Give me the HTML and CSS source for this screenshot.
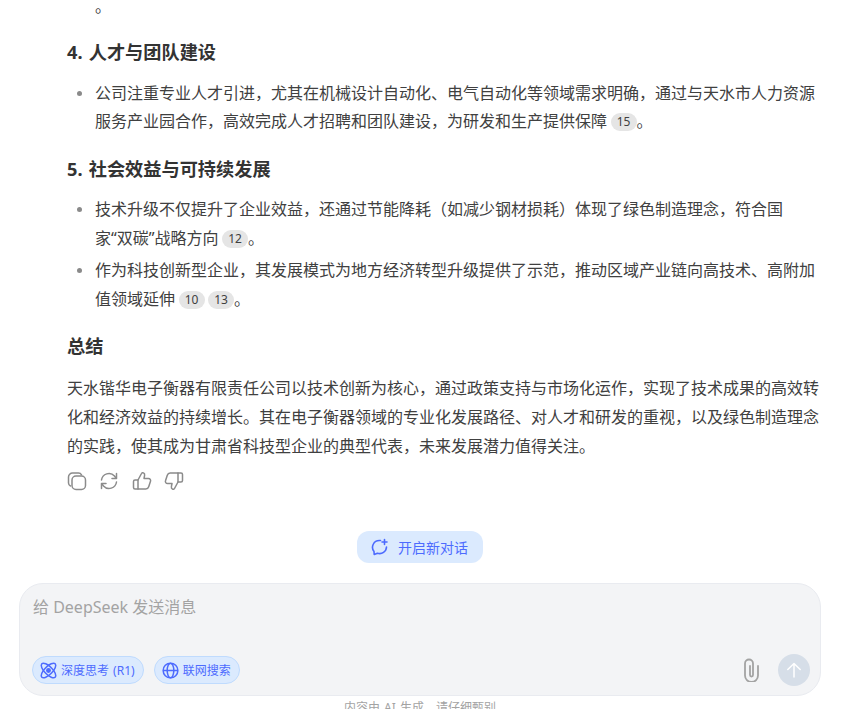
FILE: index.html
```html
<!DOCTYPE html>
<html lang="zh-CN">
<head>
<meta charset="utf-8">
<title>DeepSeek</title>
<link rel="stylesheet" href="styles.css">
</head>
<body>
<div class="page">
  <main class="answer">
    <p class="tail">。</p>
    <h3>4. 人才与团队建设</h3>
    <ul>
      <li>公司注重专业人才引进，尤其在机械设计自动化、电气自动化等领域需求明确，通过与天水市人力资源服务产业园合作，高效完成人才招聘和团队建设，为研发和生产提供保障<span class="cite">15</span>。</li>
    </ul>
    <h3>5. 社会效益与可持续发展</h3>
    <ul>
      <li>技术升级不仅提升了企业效益，还通过节能降耗（如减少钢材损耗）体现了绿色制造理念，符合国<span class="keep">家“双碳”</span>战略方向<span class="cite">12</span>。</li>
      <li>作为科技创新型企业，其发展模式为地方经济转型升级提供了示范，推动区域产业链向高技术、高附加值领域延伸<span class="cite">10</span><span class="cite">13</span>。</li>
    </ul>
    <h3>总结</h3>
    <p class="summary">天水锴华电子衡器有限责任公司以技术创新为核心，通过政策支持与市场化运作，实现了技术成果的高效转化和经济效益的持续增长。其在电子衡器领域的专业化发展路径、对人才和研发的重视，以及绿色制造理念的实践，使其成为甘肃省科技型企业的典型代表，未来发展潜力值得关注。</p>
    <div class="actions">
      <svg class="act" viewBox="0 0 20 20"><rect x="5" y="5" width="13.500" height="13.500" rx="4"/><path d="M14.500 3.800A3.500 3.500 0 0 0 11.500 2H5.500A4 4 0 0 0 1.500 6v6a3.500 3.500 0 0 0 2 3"/></svg>
      <svg class="act" viewBox="0 0 20 20"><path d="M2.500 9A7.500 7.500 0 0 1 15.500 5l1.500 2"/><path d="M17.500 2.500V7.500H13"/><path d="M17.500 11A7.500 7.500 0 0 1 4.500 15L3 13"/><path d="M2.500 17.500V12.500H7"/></svg>
      <svg class="act" viewBox="0 0 20 20"><path d="M6 9l3.500-6.500c.4-.8 1.300-1 2-.6 1 .5 1.300 1.500 1.100 2.500L12 7.500h4.500c1.500 0 2.500 1.400 2 2.800l-1.800 5.500c-.4 1.300-1.500 2.200-2.900 2.200H6z"/><path d="M6 9H3a1.500 1.500 0 0 0-1.500 1.500v6A1.500 1.500 0 0 0 3 18h3"/></svg>
      <svg class="act" viewBox="0 0 20 20"><path d="M14 11l-3.500 6.500c-.4.8-1.300 1-2 .6-1-.5-1.300-1.500-1.100-2.500L8 12.500H3.500c-1.500 0-2.500-1.400-2-2.800l1.800-5.500C3.700 2.900 4.800 2 6.200 2H14z"/><path d="M14 11h3a1.500 1.500 0 0 0 1.500-1.500v-6A1.500 1.500 0 0 0 17 2h-3"/></svg>
    </div>
    <div class="new-row">
      <button class="new-chat">
        <svg class="new-icon" viewBox="0 0 18 18"><path d="M9.500 2.500H8.500A6.800 6.800 0 0 0 3 13.500l.2 3 3.200-1.300A6.800 6.800 0 0 0 15.500 9"/><path d="M13.500 1.500v5M11 4h5"/></svg>
        <span>开启新对话</span>
      </button>
    </div>
  </main>
  <section class="composer">
    <div class="placeholder">给 DeepSeek 发送消息</div>
    <div class="tools">
      <button class="pill">
        <svg class="pill-icon" viewBox="0 0 18 18"><ellipse cx="9" cy="9" rx="10" ry="4.200" transform="rotate(45 9 9)"/><ellipse cx="9" cy="9" rx="10" ry="4.200" transform="rotate(-45 9 9)"/><circle class="dot" cx="9" cy="9" r="1.800"/></svg>
        <span>深度思考 (R1)</span>
      </button>
      <button class="pill">
        <svg class="pill-icon" viewBox="0 0 18 18"><circle cx="9" cy="9" r="7.800"/><ellipse cx="9" cy="9" rx="3.500" ry="7.800"/><path d="M1.200 9h15.600"/></svg>
        <span>联网搜索</span>
      </button>
      <div class="spacer"></div>
      <svg class="clip" viewBox="0 0 17 24"><path d="M15 8v9.500a6.500 6.500 0 0 1-13 0V5.500a4 4 0 0 1 8 0V17a1.500 1.500 0 0 1-3 0V8"/></svg>
      <button class="send">
        <svg viewBox="0 0 16 16" class="send-icon"><path d="M8 15V1.500M1.800 7.500L8 1.500l6.200 6"/></svg>
      </button>
    </div>
  </section>
  <footer class="note">内容由 AI 生成，请仔细甄别</footer>
</div>
</body>
</html>
```

FILE: styles.css
```css
* { box-sizing: border-box; }
html, body { margin: 0; padding: 0; background: #fff; }
body {
  width: 847px;
  height: 709px;
  overflow: hidden;
  font-family: "Noto Sans", "Noto Sans CJK SC", sans-serif;
  color: #404040;
}
.page {
  height: 709px;
  overflow: hidden;
  display: flex;
  flex-direction: column;
}
.answer {
  padding: 0 26px 0 67px;
  height: 583px;
  flex: none;
  font-size: 16px;
  line-height: 28.8px;
}
.tail {
  margin: 0;
  height: 16px;
  line-height: 12px;
  padding-left: 28px;
}
.keep { white-space: nowrap; }
h3 {
  margin: 0;
  font-size: 18.200px;
  word-spacing: 1.500px;
  line-height: 28px;
  font-weight: 700;
  color: #333;
}
.tail + h3 { margin-top: 22px; }
ul {
  margin: 12.600px 0 0;
  padding: 0 0 0 28px;
  list-style: none;
}
ul + h3 { margin-top: 18.500px; }
li {
  position: relative;
}
li + li { margin-top: 3.500px; }
li::before {
  content: "";
  position: absolute;
  left: -18px;
  top: 12px;
  width: 5px;
  height: 5px;
  border-radius: 50%;
  background: #8a8a8a;
}
.cite {
  display: inline-block;
  height: 18px;
  line-height: 18px;
  min-width: 26px;
  padding: 0 5px;
  margin-left: 3.500px;
  border-radius: 9px;
  background: #e5e5e5;
  color: #404040;
  font-size: 12px;
  text-align: center;
  vertical-align: 1px;
}
.summary {
  margin: 13.600px 0 0;
}
.actions {
  display: flex;
  gap: 12.400px;
  margin-top: 11px;
}
.act {
  width: 20px;
  height: 20px;
  fill: none;
  stroke: #8b8b8b;
  stroke-width: 1.500;
  stroke-linejoin: round;
  stroke-linecap: round;
}
.new-row {
  display: flex;
  justify-content: center;
  margin: 40px 0 0 -48px;
}
.new-chat {
  display: flex;
  align-items: center;
  gap: 9px;
  width: 126px;
  height: 32px;
  padding: 0 0 0 14px;
  border: 0;
  border-radius: 12px;
  background: #dbeafe;
  color: #4d6bfe;
  font: 14px "Noto Sans CJK SC", sans-serif;
}
.new-icon {
  width: 18px;
  height: 18px;
  flex: none;
  fill: none;
  stroke: #4d6bfe;
  stroke-width: 1.600;
  stroke-linecap: round;
  stroke-linejoin: round;
}
.composer {
  flex: none;
  margin: 0 26px 0 19px;
  height: 113px;
  border: 1px solid #e9ebf0;
  border-radius: 24px;
  background: #f3f4f6;
  padding: 12px 10px 9px 13px;
  display: flex;
  flex-direction: column;
  justify-content: space-between;
}
.placeholder {
  font-size: 16px;
  line-height: 22px;
  color: #a3a3a3;
}
.tools {
  display: flex;
  align-items: center;
  gap: 10px;
  height: 32px;
  margin-left: -1px;
}
.pill {
  display: flex;
  align-items: center;
  gap: 4px;
  height: 28px;
  padding: 0 8px 0 7px;
  border: 1px solid #bfdbfe;
  border-radius: 14px;
  background: #dbeafe;
  color: #4d6bfe;
  font: 12px "Noto Sans", "Noto Sans CJK SC", sans-serif;
  word-spacing: 1px;
}
.pill-icon {
  width: 17px;
  height: 17px;
  flex: none;
  fill: none;
  stroke: #4d6bfe;
  stroke-width: 1.600;
  overflow: visible;
}
.dot { fill: #4d6bfe; }
.spacer { flex: 1; }
.clip {
  width: 17px;
  height: 24px;
  margin-right: 8px;
  fill: none;
  stroke: #a3a3a3;
  stroke-width: 1.800;
  stroke-linecap: round;
}
.send {
  width: 32px;
  height: 32px;
  padding: 0;
  border: 0;
  border-radius: 50%;
  background: #d6dee8;
  display: flex;
  align-items: center;
  justify-content: center;
}
.send-icon {
  width: 16px;
  height: 16px;
  fill: none;
  stroke: #fff;
  stroke-width: 1.500;
  stroke-linecap: round;
  stroke-linejoin: round;
}
.note {
  flex: none;
  margin: 3px 26px 0 19px;
  text-align: center;
  font-size: 12px;
  word-spacing: 1px;
  line-height: 18px;
  color: #a3a3a3;
}
```
